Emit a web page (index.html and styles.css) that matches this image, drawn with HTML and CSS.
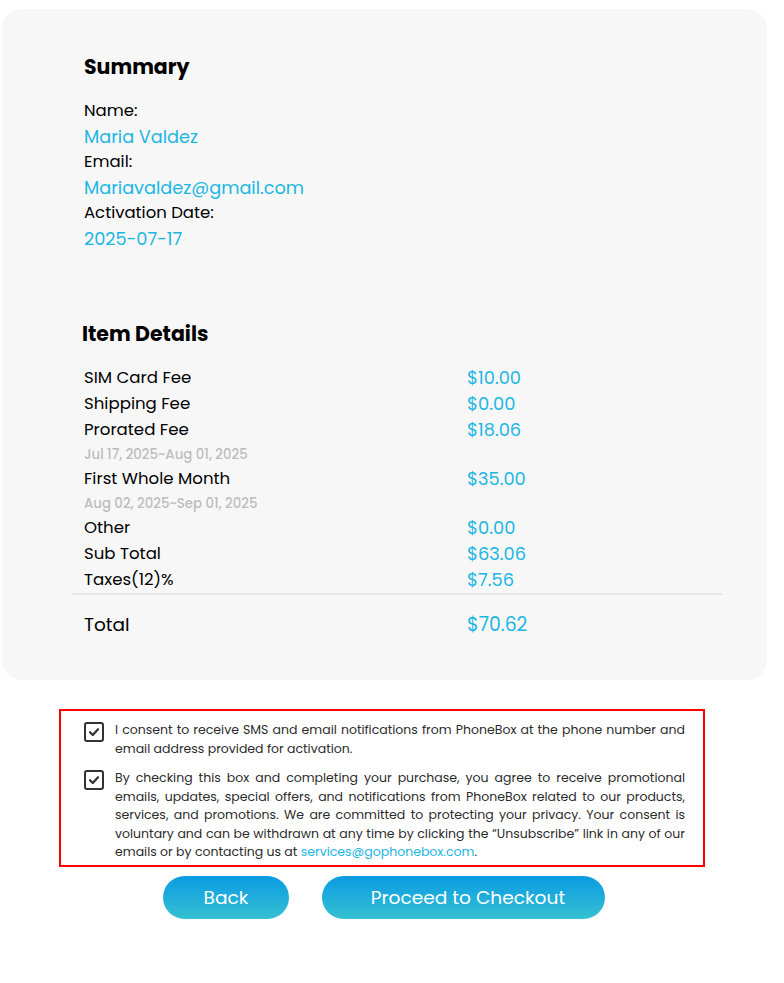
FILE: index.html
```html
<!DOCTYPE html>
<html>
<head lang="en">
    <meta charset="UTF-8">
    <title>Order Summary</title>
    <link rel="stylesheet" href="styles.css">
</head>
<body>
<div id="page">
    <div class="card">
        <div class="summary">
            <h2 class="title">Summary</h2>
            <div class="label">Name:</div>
            <div class="value">Maria Valdez</div>
            <div class="label">Email:</div>
            <div class="value">Mariavaldez@gmail.com</div>
            <div class="label">Activation Date:</div>
            <div class="value">2025-07-17</div>
        </div>

        <div class="items">
            <h2 class="title items-title">Item Details</h2>
            <div class="rows">
                <div class="row"><span>SIM Card Fee</span><span class="price">$10.00</span></div>
                <div class="row"><span>Shipping Fee</span><span class="price">$0.00</span></div>
                <div class="row"><span>Prorated Fee</span><span class="price">$18.06</span></div>
                <div class="period">Jul 17, 2025~Aug 01, 2025</div>
                <div class="row"><span>First Whole Month</span><span class="price">$35.00</span></div>
                <div class="period">Aug 02, 2025~Sep 01, 2025</div>
                <div class="row"><span>Other</span><span class="price">$0.00</span></div>
                <div class="row"><span>Sub Total</span><span class="price">$63.06</span></div>
                <div class="row"><span>Taxes(12)%</span><span class="price">$7.56</span></div>
            </div>
            <div class="divider"></div>
            <div class="rows">
                <div class="row total"><span>Total</span><span class="price">$70.62</span></div>
            </div>
        </div>
    </div>

    <div class="consent">
        <label class="check">
            <span class="box">
                <svg width="14" height="14" viewBox="0 0 14 14"><path d="M3 7.2 L5.8 10 L11 4.2" fill="none" stroke="#333" stroke-width="2.2" stroke-linecap="round" stroke-linejoin="round"/></svg>
            </span>
            <span class="check-text">I consent to receive SMS and email notifications from PhoneBox at the phone number and email address provided for activation.</span>
        </label>
        <label class="check">
            <span class="box">
                <svg width="14" height="14" viewBox="0 0 14 14"><path d="M3 7.2 L5.8 10 L11 4.2" fill="none" stroke="#333" stroke-width="2.2" stroke-linecap="round" stroke-linejoin="round"/></svg>
            </span>
            <span class="check-text">By checking this box and completing your purchase, you agree to receive promotional emails, updates, special offers, and notifications from PhoneBox related to our products, services, and promotions. We are committed to protecting your privacy. Your consent is voluntary and can be withdrawn at any time by clicking the “Unsubscribe” link in any of our emails or by contacting us at <a href="#">services@gophonebox.com</a>.</span>
        </label>
    </div>

    <div class="actions">
        <a class="btn btn-back" href="#">Back</a>
        <a class="btn btn-next" href="#">Proceed to Checkout</a>
    </div>
</div>
</body>
</html>
```

FILE: styles.css
```css
* {
    padding: 0;
    margin: 0;
    box-sizing: border-box;
}

html {
    width: 100%;
    height: 100%;
}

body {
    background: #ffffff;
    color: #000000;
    font-family: "Poppins", "Inter", "Noto Sans", sans-serif;
}

#page {
    padding-top: 9px;
}

.card {
    margin: 0 17px 0 2px;
    background: #f7f7f7;
    border-radius: 20px;
    padding: 43px 0 42px;
}

.title {
    font-size: 20.5px;
    line-height: 30px;
    font-weight: 700;
    margin-bottom: 16px;
}

.summary {
    padding-left: 82px;
}

.label,
.value {
    font-size: 16.5px;
    line-height: 25.5px;
}

.value {
    color: #1cb6e4;
    font-size: 17.7px;
}

.items {
    margin-top: 68px;
}

.items-title {
    padding-left: 80px;
}

.rows {
    padding-left: 82px;
}

.row {
    display: grid;
    grid-template-columns: 383px 1fr;
    font-size: 16.6px;
    line-height: 26px;
}

.row .price {
    color: #1cb6e4;
    font-size: 17.8px;
}

.period {
    font-size: 13.3px;
    font-weight: 500;
    line-height: 23px;
    color: #bdbdbd;
}

.divider {
    height: 2px;
    background: #e8e8e8;
    margin: 0 45px 17px 70px;
}

.total {
    font-size: 18.5px;
}

.total .price {
    font-size: 18.8px;
}

.consent {
    margin: 29px 0 0 59px;
    width: 646px;
    border: 2px solid #ff0000;
    padding: 10px 18px 3px 23px;
}

.check {
    display: flex;
    gap: 11px;
    margin-bottom: 11px;
    font-size: 12.5px;
    line-height: 18.5px;
    color: #2b2b2b;
}

.check:last-child {
    margin-bottom: 0;
}

.box {
    flex: none;
    width: 20px;
    height: 20px;
    margin-top: 1px;
    border: 2px solid #333333;
    border-radius: 3px;
    display: flex;
    align-items: center;
    justify-content: center;
}

.check-text {
    text-align: justify;
}

.check-text a {
    color: #1cb6e4;
    text-decoration: none;
}

.actions {
    display: flex;
    justify-content: center;
    gap: 33px;
    margin: 9px 0 0 -16px;
}

.btn {
    display: block;
    height: 43px;
    line-height: 43px;
    border-radius: 22px;
    text-align: center;
    color: #ffffff;
    font-size: 18.6px;
    text-decoration: none;
    background: linear-gradient(#0a9be3, #36c0d2);
}

.btn-back {
    width: 126px;
}

.btn-next {
    width: 283px;
    padding-left: 9px;
}
```
